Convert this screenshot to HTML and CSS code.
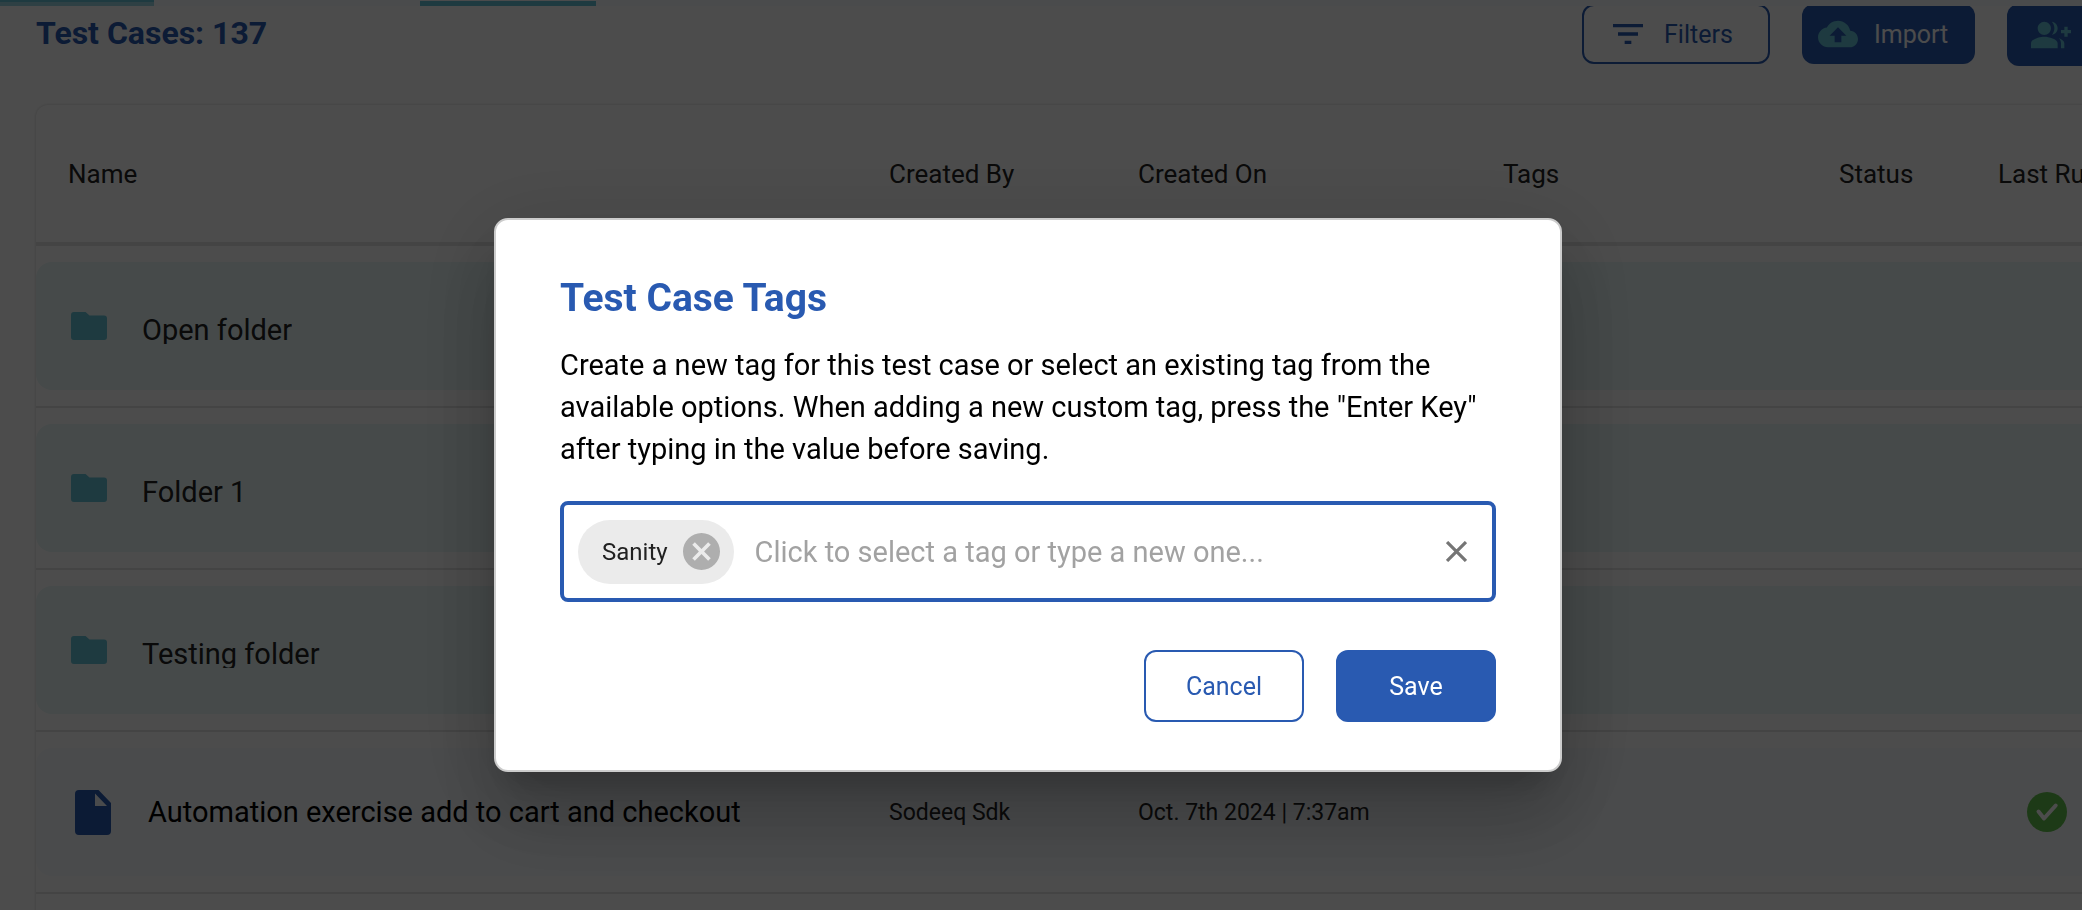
FILE: index.html
```
<!DOCTYPE html>
<html lang="en">
<head>
<meta charset="utf-8">
<title>Test Cases</title>
<link rel="stylesheet" href="styles.css">
</head>
<body>
<div class="progress-strip"><span class="strip-start"></span><span class="strip-tab"></span></div>
<main class="page">
  <header class="toolbar">
    <h1 class="page-title">Test Cases: 137</h1>
    <button class="tool tool-outline" type="button">
      <svg class="tool-icon" viewBox="0 0 24 24" aria-hidden="true"><path d="M10 18h4v-2h-4v2zM3 6v2h18V6H3zm3 7h12v-2H6v2z"/></svg>
      Filters
    </button>
    <button class="tool tool-solid tool-import" type="button">
      <svg class="tool-icon" viewBox="0 0 24 24" aria-hidden="true"><path d="M19.35 10.04C18.67 6.59 15.64 4 12 4 9.11 4 6.6 5.64 5.35 8.04 2.34 8.36 0 10.91 0 14c0 3.31 2.69 6 6 6h13c2.76 0 5-2.24 5-5 0-2.64-2.05-4.78-4.65-4.96zM14 13v4h-4v-4H7l5-5 5 5h-3z"/></svg>
      Import
    </button>
    <button class="tool tool-solid tool-invite" type="button">
      <svg class="tool-icon" viewBox="0 0 24 24" aria-hidden="true"><path d="M22 9V7h-2v2h-2v2h2v2h2v-2h2V9z"/><path d="M8 12c2.21 0 4-1.79 4-4s-1.79-4-4-4-4 1.79-4 4 1.79 4 4 4zM8 13c-2.67 0-8 1.34-8 4v3h16v-3c0-2.66-5.33-4-8-4z"/><path d="M12.51 4.05C13.43 5.11 14 6.49 14 8s-.57 2.89-1.49 3.95C14.47 11.7 16 10.04 16 8s-1.53-3.7-3.49-3.95zM16.53 13.83C17.42 14.66 18 15.7 18 17v3h2v-3c0-1.45-1.59-2.51-3.47-3.17z"/></svg>
    </button>
  </header>

  <section class="card">
    <table class="cases">
      <colgroup>
        <col><col class="col-by"><col class="col-on"><col class="col-tags"><col class="col-status"><col class="col-run">
      </colgroup>
      <thead>
        <tr><th>Name</th><th>Created By</th><th>Created On</th><th>Tags</th><th>Status</th><th>Last Run</th></tr>
      </thead>
      <tbody>
        <tr class="folder">
          <td colspan="6"><div class="band first"><svg class="folder-icon" viewBox="0 0 36 28" aria-hidden="true"><path d="M3 0H14.500L18.500 3.500H33a3 3 0 0 1 3 3V25a3 3 0 0 1-3 3H3a3 3 0 0 1-3-3V3a3 3 0 0 1 3-3z"/></svg><span class="folder-name">Open folder</span></div></td>
        </tr>
        <tr class="folder">
          <td colspan="6"><div class="band first"><svg class="folder-icon" viewBox="0 0 36 28" aria-hidden="true"><path d="M3 0H14.500L18.500 3.500H33a3 3 0 0 1 3 3V25a3 3 0 0 1-3 3H3a3 3 0 0 1-3-3V3a3 3 0 0 1 3-3z"/></svg><span class="folder-name">Folder 1</span></div></td>
        </tr>
        <tr class="folder">
          <td colspan="6"><div class="band first"><svg class="folder-icon" viewBox="0 0 36 28" aria-hidden="true"><path d="M3 0H14.500L18.500 3.500H33a3 3 0 0 1 3 3V25a3 3 0 0 1-3 3H3a3 3 0 0 1-3-3V3a3 3 0 0 1 3-3z"/></svg><span class="folder-name">Testing folder</span></div></td>
        </tr>
        <tr class="case">
          <td><div class="band first"><svg class="file-icon" viewBox="0 0 36 45" aria-hidden="true"><path fill-rule="evenodd" d="M4 0H23.500L36 13V41a4 4 0 0 1-4 4H4a4 4 0 0 1-4-4V4a4 4 0 0 1 4-4zM20 3.500V16H32z"/></svg><span class="case-name">Automation exercise add to cart and checkout</span></div></td>
          <td><div class="band">Sodeeq Sdk</div></td>
          <td><div class="band">Oct. 7th 2024 | 7:37am</div></td>
          <td><div class="band"></div></td>
          <td><div class="band"></div></td>
          <td><div class="band run"><svg class="pass-icon" viewBox="0 0 40 40" role="img" aria-label="Passed"><circle cx="20" cy="20" r="20"/><path d="M11.500 19.500L17 26.500L28.700 13.500"/></svg></div></td>
        </tr>
      </tbody>
    </table>
  </section>
</main>

<div class="backdrop">
  <form class="dialog" role="dialog" aria-modal="true" aria-labelledby="dialog-title">
    <h2 class="dialog-title" id="dialog-title">Test Case Tags</h2>
    <p class="dialog-text"><label for="tag-input">Create a new tag for this test case or select an existing tag from the available options. When adding a new custom tag, press the "Enter Key" after typing in the value before saving.</label></p>
    <div class="tag-field">
      <span class="chip">Sanity
        <button class="chip-remove" type="button" aria-label="Remove Sanity"><svg viewBox="2 2 20 20" aria-hidden="true"><path d="M12 2C6.470 2 2 6.470 2 12s4.470 10 10 10 10-4.470 10-10S17.530 2 12 2zm5 13.590L15.590 17 12 13.410 8.410 17 7 15.590 10.590 12 7 8.410 8.410 7 12 10.590 15.590 7 17 8.410 13.410 12 17 15.590z"/></svg></button>
      </span>
      <input class="tag-input" id="tag-input" type="text" placeholder="Click to select a tag or type a new one...">
      <button class="clear" type="button" aria-label="Clear"><svg viewBox="0 0 20 20" aria-hidden="true"><path d="M1 1L19 19M19 1L1 19"/></svg></button>
    </div>
    <div class="dialog-actions">
      <button class="action action-cancel" type="button">Cancel</button>
      <button class="action action-save" type="submit">Save</button>
    </div>
  </form>
</div>
</body>
</html>
```

FILE: styles.css
```
:root {
  --blue: #295ab1;
  --teal: #64c1d5;
}

* {
  box-sizing: border-box;
}

body {
  margin: 0;
  height: 100vh;
  overflow: hidden;
  background: #fff;
  color: #222;
  font-family: Roboto, "Liberation Sans", sans-serif;
}

button,
input {
  font-family: inherit;
}

.progress-strip {
  position: fixed;
  inset: 0 0 auto;
  display: flex;
  align-items: flex-end;
  height: 6px;
  background: #f7faff;
}

.strip-start {
  width: 154px;
  height: 6px;
  margin-right: 266px;
  background: linear-gradient(var(--teal) 2px, #9cd8e4 2px);
}

.strip-tab {
  width: 176px;
  height: 5px;
  background: var(--teal);
}

.page {
  width: calc(100% + 120px);
  padding: 4px 36px 0;
}

.toolbar {
  display: flex;
  align-items: flex-start;
  gap: 32px;
  margin-bottom: 39px;
}

.page-title {
  flex: 1;
  margin: 0;
  color: var(--blue);
  font-size: 32px;
  font-weight: 700;
  line-height: 58px;
}

.tool {
  display: flex;
  align-items: center;
  height: 60px;
  border: 0;
  border-radius: 12px;
  font-size: 25px;
}

.tool-icon {
  width: 40px;
  height: 40px;
  fill: currentColor;
}

.tool-outline {
  width: 188px;
  padding: 0 24px;
  gap: 16px;
  border: 2px solid var(--blue);
  background: transparent;
  color: var(--blue);
}

.tool-solid {
  background: var(--blue);
  color: #fff;
}

.tool-solid .tool-icon {
  fill: var(--teal);
}

.tool-import {
  width: 173px;
  padding: 0 16px;
  gap: 16px;
}

.tool-invite {
  width: 159px;
  height: 62px;
  padding: 0 24px;
}

.card {
  min-height: 100vh;
  border-radius: 12px;
  box-shadow: 0 0 3px rgba(0, 0, 0, 0.2);
}

.cases {
  width: 100%;
  table-layout: fixed;
  border-collapse: separate;
  border-spacing: 0;
}

.col-by { width: 249px; }
.col-on { width: 365px; }
.col-tags { width: 336px; }
.col-status { width: 159px; }
.col-run { width: 168px; }

.cases th {
  height: 141px;
  padding: 0;
  border-bottom: 4px solid #e3e3e3;
  font-size: 26px;
  font-weight: 400;
  text-align: left;
}

.cases th:first-child {
  padding-left: 32px;
}

.cases td {
  padding: 16px 0;
  border-bottom: 2px solid #e3e3e3;
}

.band {
  display: flex;
  align-items: center;
  height: 128px;
  font-size: 23px;
}

.band.first {
  border-radius: 16px 0 0 16px;
}

.folder .band {
  padding-left: 35px;
  gap: 35px;
  background: #e9f7f7;
}

.case .band {
  background: #f7fafd;
}

.case .band.first {
  padding-left: 39px;
  gap: 37px;
}

.folder-icon {
  width: 36px;
  height: 28px;
  fill: var(--teal);
}

.folder-name {
  height: 28px;
  margin-top: 8px;
  overflow: hidden;
  font-size: 29px;
  line-height: 28px;
}

.file-icon {
  width: 36px;
  height: 45px;
  fill: var(--blue);
}

.case-name {
  color: #000;
  font-size: 29px;
}

.run {
  padding-left: 29px;
}

.pass-icon {
  width: 40px;
  height: 40px;
}

.pass-icon circle {
  fill: #63c24d;
}

.pass-icon path {
  fill: none;
  stroke: #fff;
  stroke-width: 4;
  stroke-linecap: round;
  stroke-linejoin: round;
}

.backdrop {
  position: fixed;
  inset: 0;
  display: flex;
  align-items: center;
  justify-content: center;
  padding: 80px 26px 0 0;
  background: rgba(0, 0, 0, 0.7);
}

.dialog {
  width: 1068px;
  max-width: 100%;
  padding: 54px 64px 48px;
  border: 2px solid #ccc;
  border-radius: 14px;
  background: #fff;
  box-shadow:
    0 22px 30px -14px rgba(0, 0, 0, 0.2),
    0 48px 76px 6px rgba(0, 0, 0, 0.14),
    0 18px 92px 16px rgba(0, 0, 0, 0.12);
}

.dialog-title {
  margin: 0 0 22px;
  color: var(--blue);
  font-size: 39px;
  font-weight: 700;
  line-height: 48px;
}

.dialog-text {
  margin: 0 0 31px;
  color: #000;
  font-size: 29px;
  line-height: 42px;
}

.tag-field {
  display: flex;
  align-items: center;
  height: 101px;
  padding: 0 25px 0 14px;
  border: 4px solid var(--blue);
  border-radius: 8px;
}

.chip {
  display: flex;
  align-items: center;
  gap: 15px;
  height: 64px;
  padding: 0 14px 0 24px;
  border-radius: 32px;
  background: #ebebeb;
  color: #212121;
  font-size: 24px;
}

.chip-remove,
.clear {
  display: flex;
  padding: 0;
  border: 0;
  background: none;
}

.chip-remove svg {
  width: 37px;
  height: 37px;
  fill: #aeaeae;
}

.tag-input {
  flex: 1;
  min-width: 0;
  padding: 0 21px;
  border: 0;
  outline: 0;
  background: none;
  font-size: 29px;
}

.tag-input::placeholder {
  color: #a2a2a2;
  opacity: 1;
}

.clear svg {
  width: 21px;
  height: 21px;
  fill: none;
  stroke: #757575;
  stroke-width: 3;
}

.dialog-actions {
  display: flex;
  justify-content: flex-end;
  gap: 32px;
  margin-top: 48px;
}

.action {
  width: 160px;
  height: 72px;
  border: 2px solid var(--blue);
  border-radius: 12px;
  font-size: 25px;
}

.action-cancel {
  background: #fff;
  color: var(--blue);
}

.action-save {
  background: var(--blue);
  color: #fff;
}
```
